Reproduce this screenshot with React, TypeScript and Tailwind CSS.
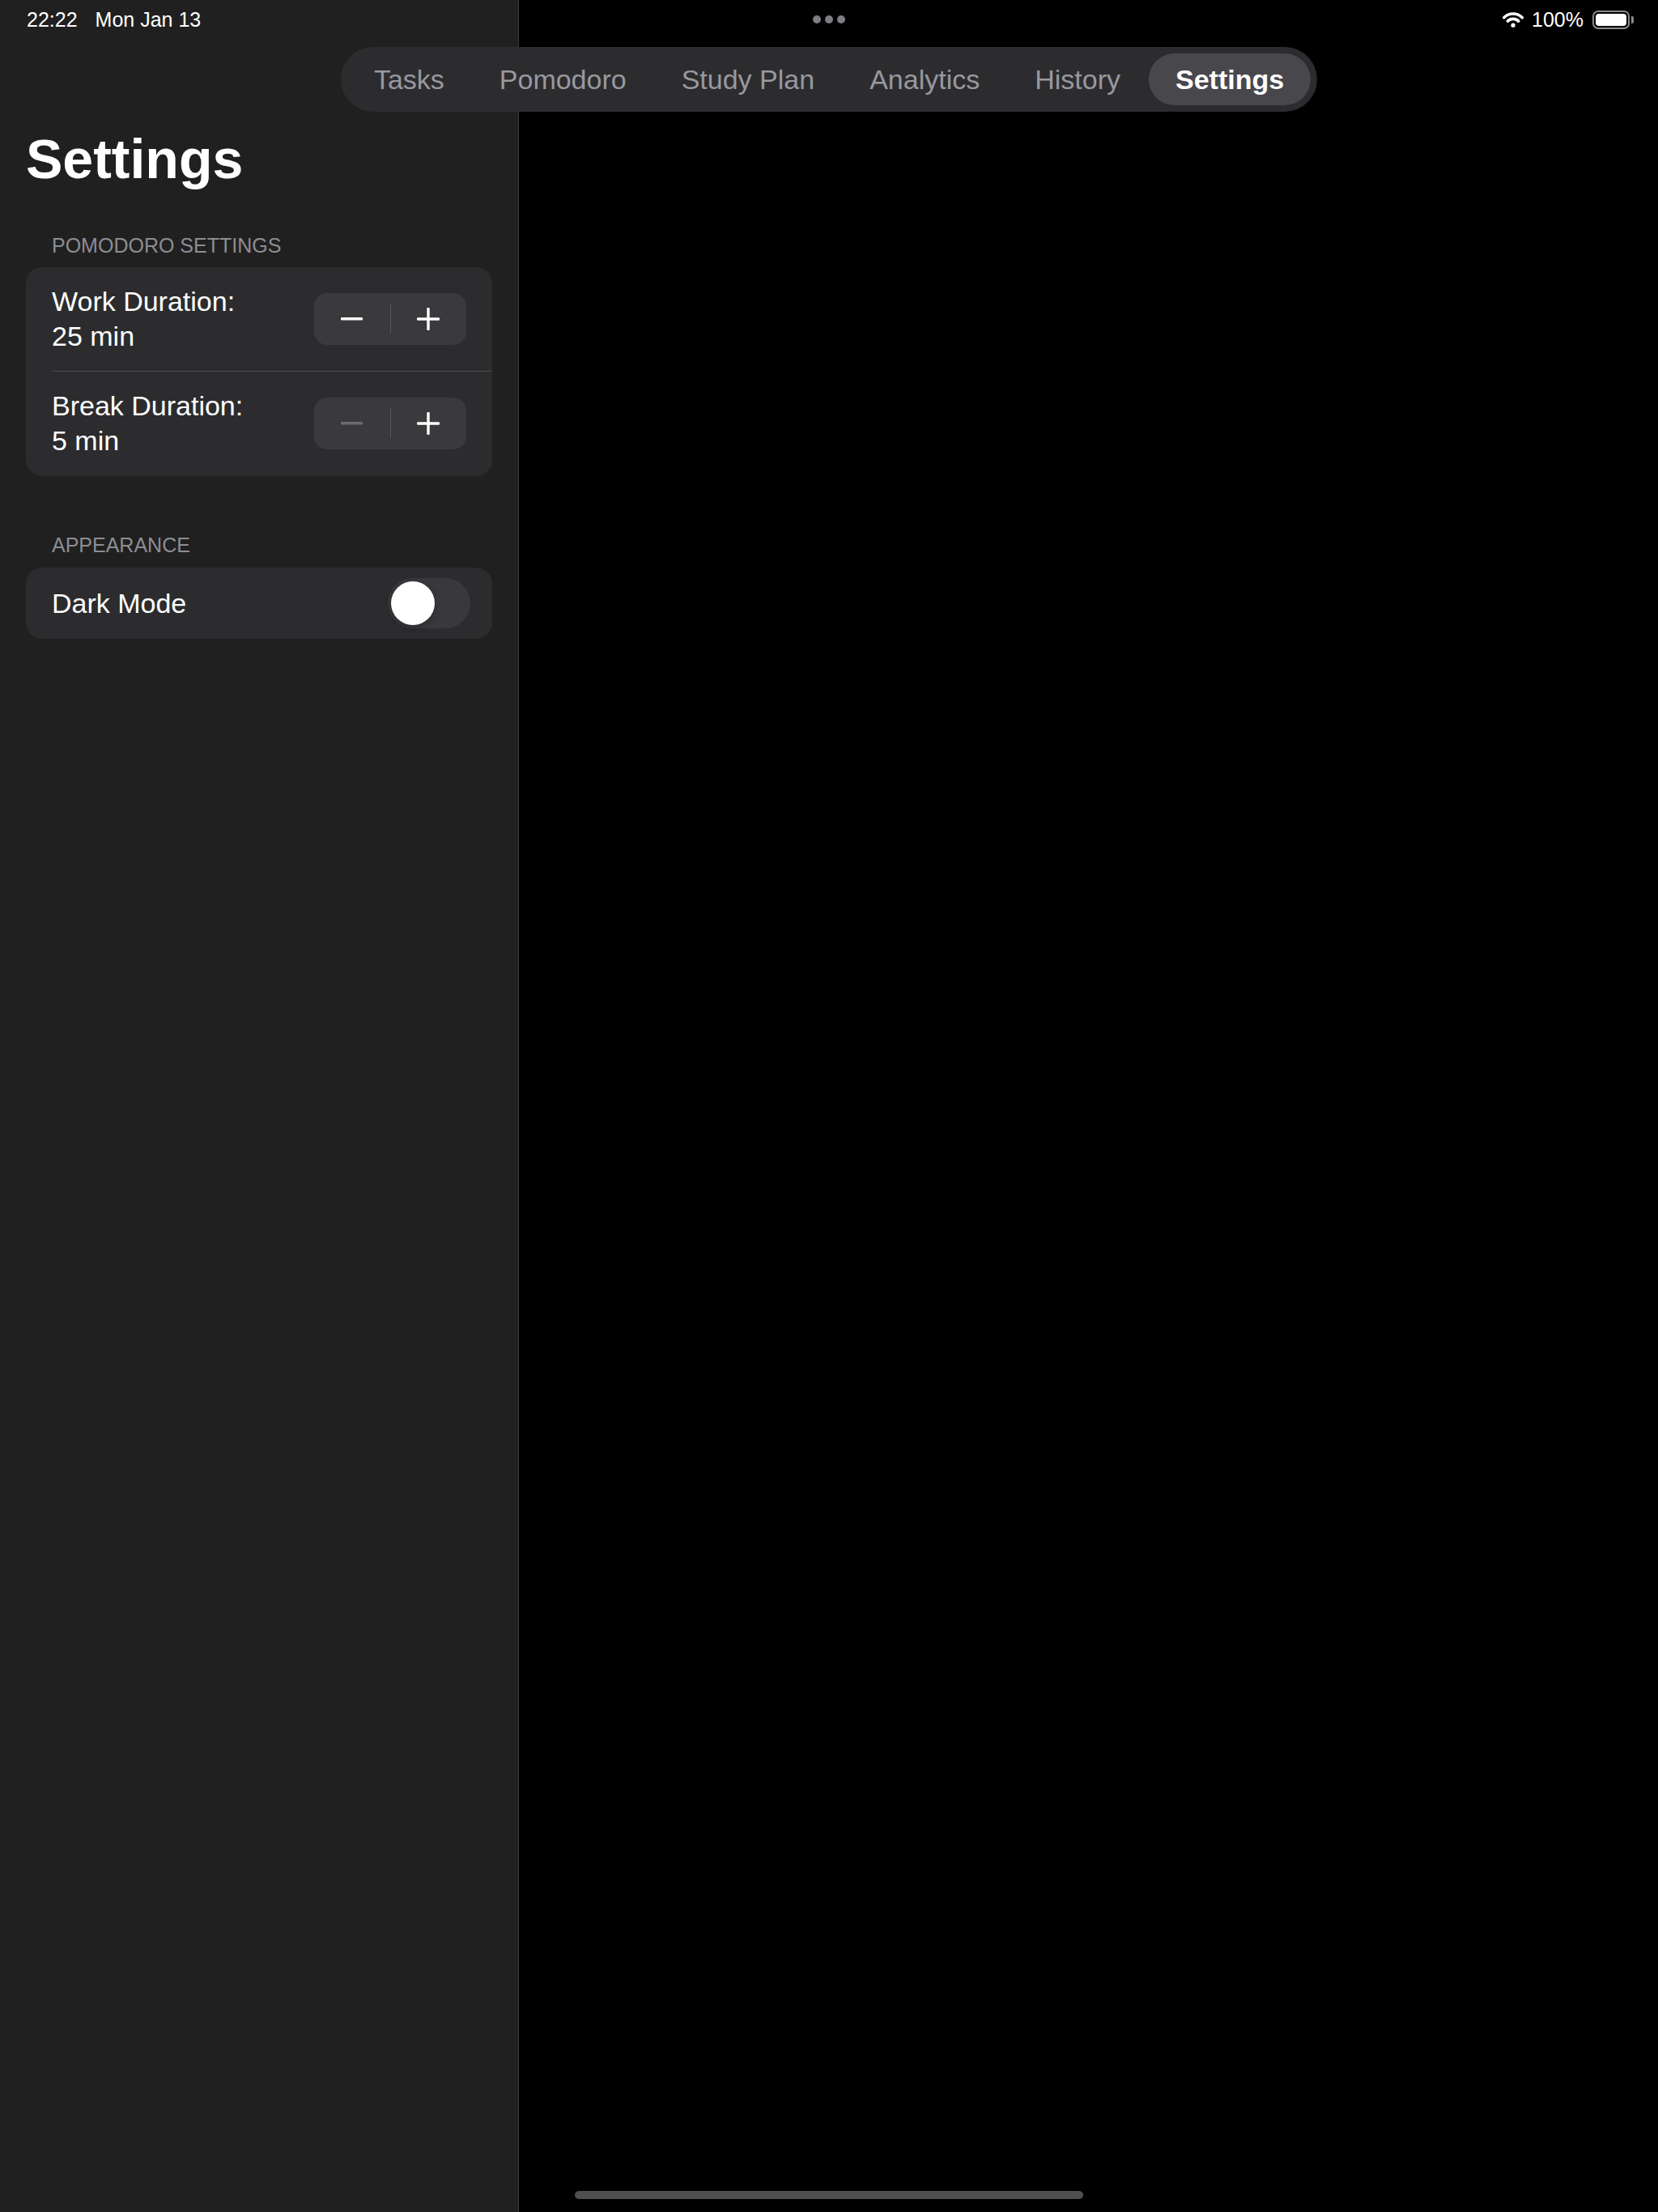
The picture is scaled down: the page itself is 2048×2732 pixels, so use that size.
import { useState } from 'react';

const tabs = ['Tasks', 'Pomodoro', 'Study Plan', 'Analytics', 'History', 'Settings'];

function WifiIcon() {
  return (
    <svg width="28" height="20" viewBox="0 0 28 20" fill="none">
      <path d="M2.7 7.7 A16 16 0 0 1 25.3 7.7" stroke="white" strokeWidth="3.6" strokeLinecap="round" />
      <path d="M7.3 12.1 A9.5 9.5 0 0 1 20.7 12.1" stroke="white" strokeWidth="3.6" strokeLinecap="round" />
      <circle cx="14" cy="17.2" r="2.6" fill="white" />
    </svg>
  );
}

function Battery() {
  return (
    <div className="flex items-center">
      <div className="w-[46px] h-[23px] rounded-[7px] border-2 border-[#8a8a8c] p-[2px]">
        <div className="w-full h-full rounded-[4px] bg-white" />
      </div>
      <div className="w-[3px] h-[9px] rounded-r-[2px] bg-[#8a8a8c] ml-[2px]" />
    </div>
  );
}

function Stepper({ minusDisabled, onMinus, onPlus }: { minusDisabled?: boolean; onMinus: () => void; onPlus: () => void }) {
  return (
    <div className="flex items-center w-[188px] h-[64px] rounded-[16px] bg-[#3a3a3d]">
      <button onClick={onMinus} className="flex-1 h-full flex items-center justify-center">
        <svg width="27" height="4" viewBox="0 0 27 4">
          <rect x="0" y="0" width="27" height="3.4" rx="1.2" fill={minusDisabled ? '#6c6c70' : 'white'} />
        </svg>
      </button>
      <div className="w-px h-[36px] bg-[#56565a]" />
      <button onClick={onPlus} className="flex-1 h-full flex items-center justify-center">
        <svg width="28" height="28" viewBox="0 0 28 28">
          <rect x="0" y="12.3" width="28" height="3.4" rx="1.2" fill="white" />
          <rect x="12.3" y="0" width="3.4" height="28" rx="1.2" fill="white" />
        </svg>
      </button>
    </div>
  );
}

export default function App() {
  const [workMin, setWorkMin] = useState(25);
  const [breakMin, setBreakMin] = useState(5);
  const [darkMode, setDarkMode] = useState(false);

  return (
    <div
      className="relative flex w-[2048px] h-[2732px] bg-black text-white overflow-hidden"
      style={{ fontFamily: '"Liberation Sans", Arial, sans-serif' }}
    >
      {/* sidebar */}
      <div className="w-[641px] h-full bg-[#202020] border-r border-[#3b3b3b] px-8 pt-[155px]">
        <h1 className="text-[68px] leading-[82px] font-bold">Settings</h1>

        <div className="mt-[50px] pl-8 text-[25px] leading-[32px] text-[#8d8d93]">POMODORO SETTINGS</div>
        <div className="mt-[11px] rounded-[20px] bg-[#2c2c2e]">
          <div className="flex items-center justify-between px-8 py-[21px]">
            <div className="text-[34px] leading-[43px]">
              <div>Work Duration:</div>
              <div>{workMin} min</div>
            </div>
            <Stepper onMinus={() => setWorkMin(Math.max(5, workMin - 5))} onPlus={() => setWorkMin(workMin + 5)} />
          </div>
          <div className="ml-8 h-px bg-[#4c4c4f]" />
          <div className="flex items-center justify-between px-8 pt-[21px] pb-[22px]">
            <div className="text-[34px] leading-[43px]">
              <div>Break Duration:</div>
              <div>{breakMin} min</div>
            </div>
            <Stepper
              minusDisabled={breakMin <= 5}
              onMinus={() => setBreakMin(Math.max(5, breakMin - 1))}
              onPlus={() => setBreakMin(breakMin + 1)}
            />
          </div>
        </div>

        <div className="mt-[69px] pl-8 text-[25px] leading-[32px] text-[#8d8d93]">APPEARANCE</div>
        <div className="mt-[12px] h-[88px] rounded-[20px] bg-[#2c2c2e] flex items-center justify-between pl-8 pr-[27px]">
          <span className="text-[34px] leading-[43px]">Dark Mode</span>
          <button
            onClick={() => setDarkMode(!darkMode)}
            className={`w-[102px] h-[62px] rounded-full p-[4px] flex ${darkMode ? 'bg-[#34c759] justify-end' : 'bg-[#39393d] justify-start'}`}
          >
            <div className="w-[54px] h-[54px] rounded-full bg-white shadow-[0_3px_8px_rgba(0,0,0,0.25)]" />
          </button>
        </div>
      </div>

      {/* detail pane */}
      <div className="flex-1 h-full bg-black" />

      {/* status bar */}
      <div className="absolute top-0 left-0 right-0 h-[48px] flex items-center justify-between pl-[33px] pr-[30px] text-[25px] leading-[48px]">
        <div className="flex gap-[22px]">
          <span>22:22</span>
          <span>Mon Jan 13</span>
        </div>
        <div className="flex items-center">
          <WifiIcon />
          <span className="ml-[9px]">100%</span>
          <div className="ml-[11px]">
            <Battery />
          </div>
        </div>
      </div>

      {/* multitasking dots */}
      <div className="absolute top-[19px] left-1/2 -translate-x-1/2 flex gap-[5px]">
        <div className="w-[10px] h-[10px] rounded-full bg-[#7d7d82]" />
        <div className="w-[10px] h-[10px] rounded-full bg-[#7d7d82]" />
        <div className="w-[10px] h-[10px] rounded-full bg-[#7d7d82]" />
      </div>

      {/* tab bar */}
      <div className="absolute top-[58px] left-1/2 -translate-x-1/2 h-[80px] rounded-full bg-[#2c2c2f] p-2 flex items-center gap-[2px]">
        {tabs.map((t) => (
          <div
            key={t}
            className={`h-[64px] px-[33px] rounded-full flex items-center text-[34px] leading-[64px] whitespace-nowrap ${
              t === 'Settings' ? 'bg-[#48484c] text-white font-bold' : 'text-[#98989e]'
            }`}
          >
            {t}
          </div>
        ))}
      </div>

      {/* home indicator */}
      <div className="absolute bottom-[16px] left-1/2 -translate-x-1/2 w-[628px] h-[10px] rounded-full bg-[#4f4f4f]" />
    </div>
  );
}
